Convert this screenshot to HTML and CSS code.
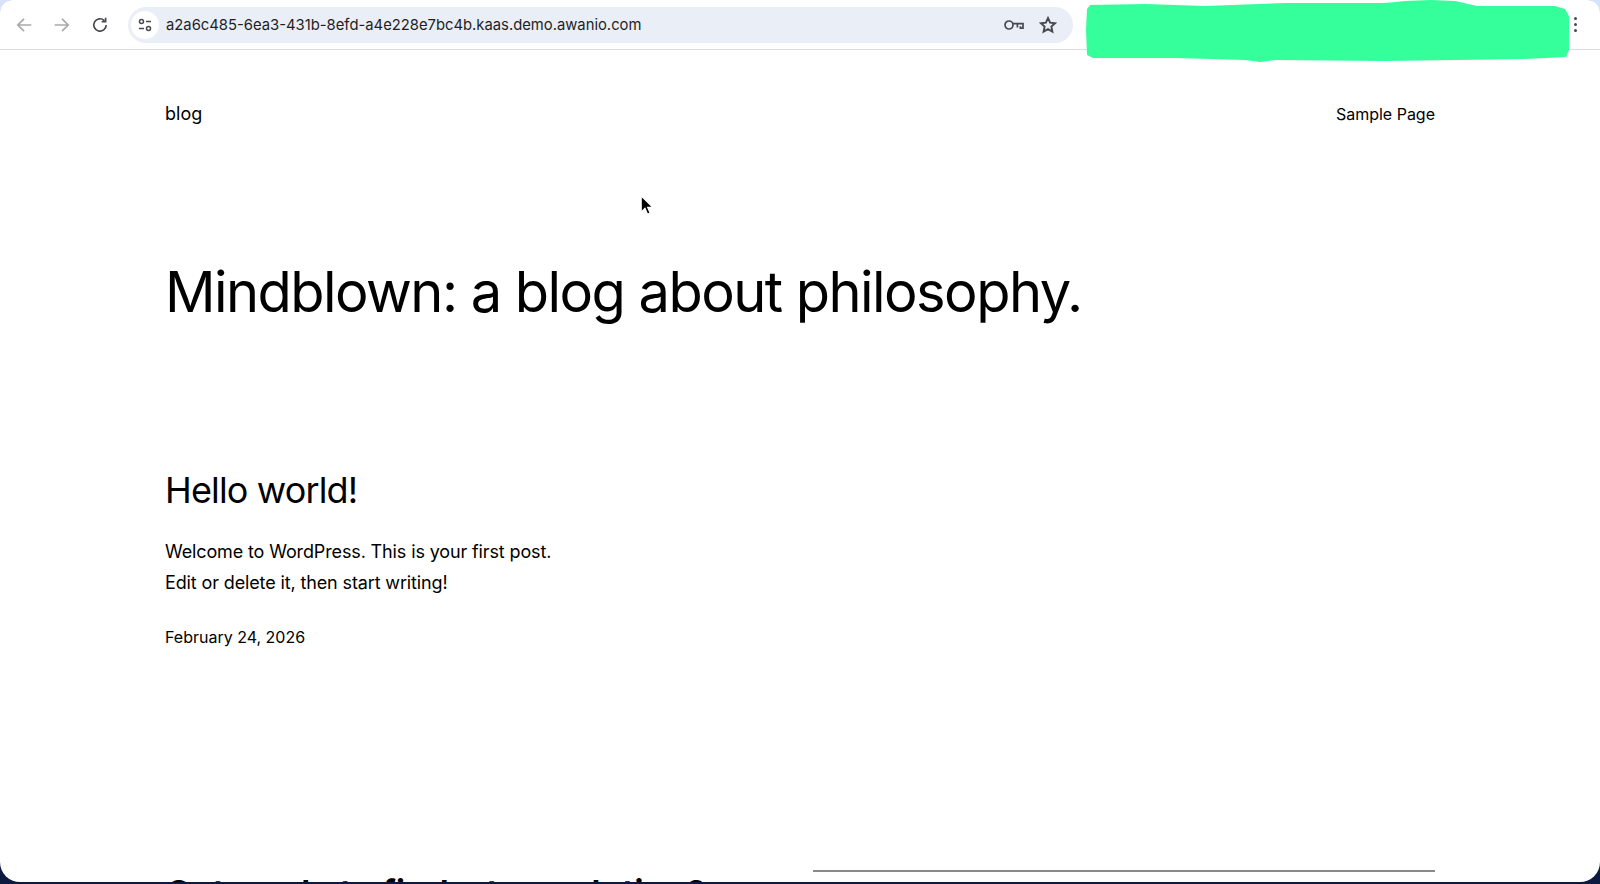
FILE: index.html
```html
<!DOCTYPE html>
<html lang="en">
<head>
<meta charset="utf-8">
<title>blog</title>
<link rel="stylesheet" href="styles.css">
</head>
<body>
<div class="window">
  <div class="toolbar">
    <div class="nav">
      <svg class="icon" viewBox="0 0 16 16"><path class="dim" d="M14.5 8H2.5M8 2.5 2.5 8 8 13.5"/></svg>
      <svg class="icon" viewBox="0 0 16 16"><path class="dim" d="M1.5 8h12M8 2.5 13.5 8 8 13.5"/></svg>
      <svg class="icon" viewBox="0 0 16 16"><path class="dark" d="M13.5 8A5.5 5.5 0 1 1 11.8 4M13 1.5V5H9.5"/></svg>
    </div>
    <div class="omnibox">
      <span class="tune"><svg viewBox="0 0 16 16"><circle class="dark" cx="4.5" cy="4.5" r="2"/><path class="dark" d="M9 4.5h5M2 11.5h5"/><circle class="dark" cx="11.5" cy="11.5" r="2"/></svg></span>
      <span class="url">a2a6c485-6ea3-431b-8efd-a4e228e7bc4b.kaas.demo.awanio.com</span>
      <svg class="key" viewBox="0 0 20 12"><circle class="heavy" cx="5" cy="6" r="4"/><path class="heavy" d="M9 4.6h10v4.6h-2.6V7.2M13.4 8.6V4.6"/></svg>
      <svg class="star" viewBox="0 0 16 16"><path class="heavy" d="m8 1.8 1.9 4.1 4.4.5-3.3 3 .9 4.4L8 11.6l-3.9 2.2.9-4.4-3.3-3 4.4-.5z"/></svg>
    </div>
    <div class="menu"><i></i><i></i><i></i></div>
  </div>
  <div class="page">
    <header class="site-head">
      <span class="site-title">blog</span>
      <span class="site-nav">Sample Page</span>
    </header>
    <h1 class="hero">Mindblown: a blog about philosophy.</h1>
    <article class="post">
      <h2 class="post-title">Hello world!</h2>
      <p class="excerpt">Welcome to WordPress. This is your first post.<br>Edit or delete it, then start writing!</p>
      <p class="date">February 24, 2026</p>
    </article>
    <div class="next-row">
      <h2 class="next-title">Get ready to find a top solution?</h2>
      <div class="rule"></div>
    </div>
  </div>
  <svg class="redact" viewBox="0 0 486 62"><path d="M5 5 60 4 120 6 200 3 300 3 320 1 345 0 370 1 392 6 470 6 480 9 484 16 484 50 481 57 440 59 300 61 190 60 175 62 160 60 90 58 8 58 2 55 1 30 2 9z"/></svg>
  <svg class="cursor" viewBox="0 0 12 20"><path d="M1 1v15l3.6-3.4 2.4 5.6 2.4-1-2.4-5.4H12z"/></svg>
</div>
</body>
</html>
```

FILE: styles.css
```css
* { box-sizing: border-box; }
html, body { margin: 0; height: 100%; overflow: hidden; }
body { background: #0b1a3e; font-family: Inter, "Liberation Sans", sans-serif; color: #000; }
.window { position: relative; width: 1600px; height: 882px; background: #fff; border-radius: 0 0 20px 20px; overflow: hidden; }
.toolbar {
  height: 50px; display: flex; align-items: center; border-bottom: 1px solid #dcdde0; padding: 0 0 0 15px;
  background:
    radial-gradient(circle 12px at 12px 12px, #fff 92%, #d6e2fa 100%) left top / 12px 12px no-repeat,
    radial-gradient(circle 12px at 0 12px, #fff 92%, #d6e2fa 100%) right top / 12px 12px no-repeat,
    #fff;
}
.nav { display: flex; gap: 20px; width: 113px; }
.icon { width: 18px; height: 18px; fill: none; }
.dim { stroke: #a8a9ab; fill: none; stroke-width: 1.5; }
.dark { stroke: #47494d; fill: none; stroke-width: 1.5; }
.heavy { stroke: #47494d; fill: none; stroke-width: 1.7; }
.omnibox { width: 945px; height: 36px; align-self: flex-start; margin-top: 7px; border-radius: 18px; background: #e9eef7; display: flex; align-items: center; padding: 0 16px 0 3px; }
.tune { width: 28px; height: 28px; border-radius: 50%; background: #fff; display: flex; align-items: center; justify-content: center; flex: none; }
.tune svg { width: 16px; height: 16px; }
.url { flex: 1; margin-left: 7px; font-size: 14.8px; color: #1f1f1f; }
.key { width: 20px; height: 12px; margin-right: 15px; }
.star { width: 18px; height: 18px; }
.menu { display: flex; flex-direction: column; gap: 3px; margin-left: 501px; }
.menu i { width: 3px; height: 3px; border-radius: 50%; background: #47494d; }
.page { padding: 0 165px; }
.site-head { display: flex; justify-content: space-between; align-items: center; padding-top: 51px; height: 76px; }
.site-title { font-size: 18px; }
.site-nav { font-size: 16px; }
.hero { font-size: 56px; font-weight: 400; margin: 0; padding-top: 133px; line-height: 1.2; letter-spacing: -1.55px; }
.post { padding-top: 143px; }
.post-title { margin: 0; font-size: 36px; font-weight: 400; line-height: 1.2; letter-spacing: -.85px; }
.excerpt { margin: 25px 0 0; font-size: 18px; line-height: 30.6px; letter-spacing: -.13px; }
.date { margin: 26px 0 0; font-size: 16px; line-height: 24px; }
.next-row { display: flex; justify-content: space-between; padding-top: 221px; align-items: flex-start; }
.next-title { margin: 2px 0 0; font-size: 36px; font-weight: 600; line-height: 1.2; white-space: nowrap; letter-spacing: -.4px; }
.rule { width: 622px; height: 2px; background: #8a8a8a; flex: none; }
.redact { position: absolute; left: 1085px; top: 0; width: 486px; height: 62px; fill: #35ff9b; }
.cursor { position: absolute; left: 640px; top: 195px; width: 13px; height: 21px; fill: #000; stroke: #fff; stroke-width: 1; }
```
